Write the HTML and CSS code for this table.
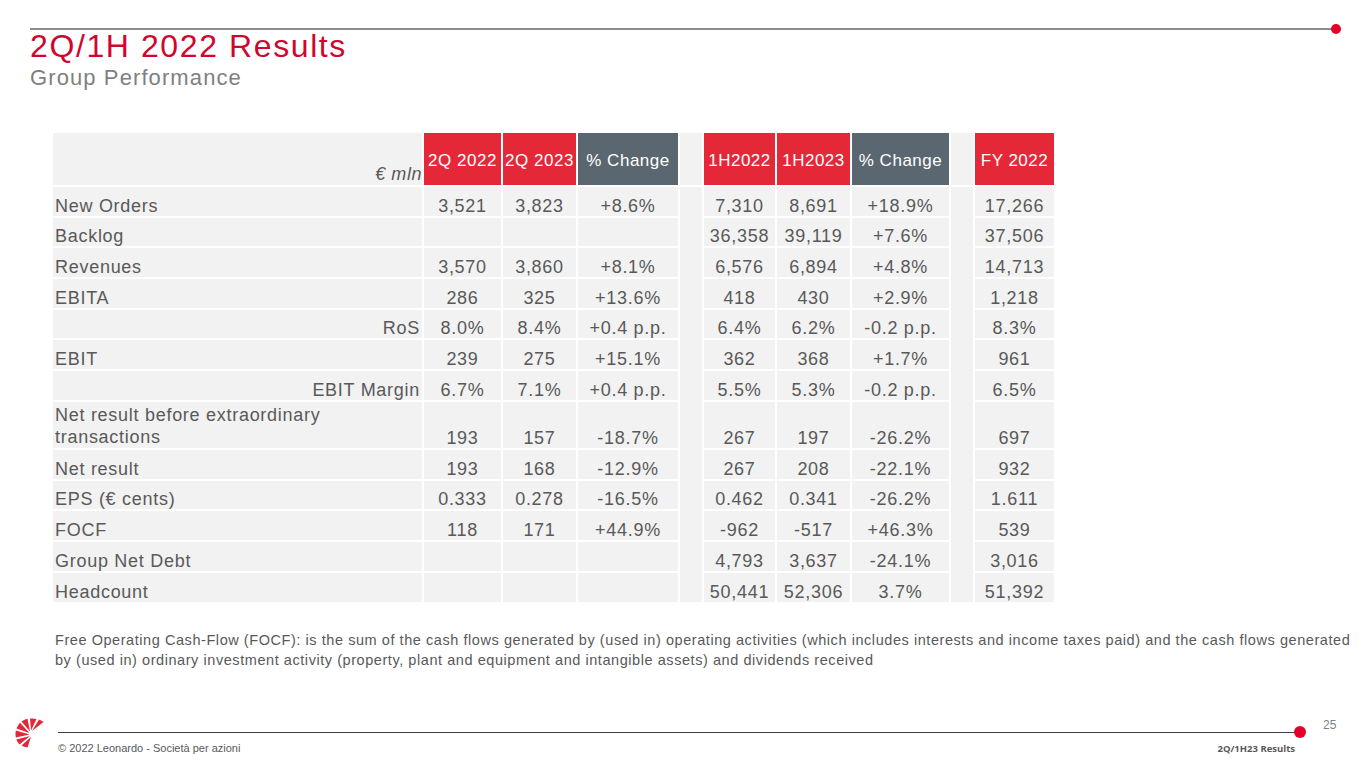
FILE: index.html
```html
<!DOCTYPE html>
<html lang="en">
<head>
<meta charset="utf-8">
<title>2Q/1H 2022 Results</title>
<link rel="stylesheet" href="styles.css">
</head>
<body>
<div class="slide">
  <div class="topline"><div class="rule"></div><div class="dot"></div></div>
  <header class="heading">
    <h1 class="title">2Q/1H 2022 Results</h1>
    <h2 class="subtitle">Group Performance</h2>
  </header>

  <table class="perf">
    <colgroup>
      <col class="c-label"><col class="c-a"><col class="c-b"><col class="c-c"><col class="c-sp">
      <col class="c-d"><col class="c-e"><col class="c-f"><col class="c-sp"><col class="c-g">
    </colgroup>
    <thead>
      <tr>
        <th class="unit">€ mln</th>
        <th class="red">2Q 2022</th>
        <th class="red">2Q 2023</th>
        <th class="grey">% Change</th>
        <th class="sp"></th>
        <th class="red">1H2022</th>
        <th class="red">1H2023</th>
        <th class="grey">% Change</th>
        <th class="sp"></th>
        <th class="red">FY 2022</th>
      </tr>
    </thead>
    <tbody>
      <tr><td class="lbl">New Orders</td><td>3,521</td><td>3,823</td><td>+8.6%</td><td class="sp"></td><td>7,310</td><td>8,691</td><td>+18.9%</td><td class="sp"></td><td>17,266</td></tr>
      <tr><td class="lbl">Backlog</td><td></td><td></td><td></td><td class="sp"></td><td>36,358</td><td>39,119</td><td>+7.6%</td><td class="sp"></td><td>37,506</td></tr>
      <tr><td class="lbl">Revenues</td><td>3,570</td><td>3,860</td><td>+8.1%</td><td class="sp"></td><td>6,576</td><td>6,894</td><td>+4.8%</td><td class="sp"></td><td>14,713</td></tr>
      <tr><td class="lbl">EBITA</td><td>286</td><td>325</td><td>+13.6%</td><td class="sp"></td><td>418</td><td>430</td><td>+2.9%</td><td class="sp"></td><td>1,218</td></tr>
      <tr><td class="lbl right">RoS</td><td>8.0%</td><td>8.4%</td><td>+0.4 p.p.</td><td class="sp"></td><td>6.4%</td><td>6.2%</td><td>-0.2 p.p.</td><td class="sp"></td><td>8.3%</td></tr>
      <tr><td class="lbl">EBIT</td><td>239</td><td>275</td><td>+15.1%</td><td class="sp"></td><td>362</td><td>368</td><td>+1.7%</td><td class="sp"></td><td>961</td></tr>
      <tr><td class="lbl right">EBIT Margin</td><td>6.7%</td><td>7.1%</td><td>+0.4 p.p.</td><td class="sp"></td><td>5.5%</td><td>5.3%</td><td>-0.2 p.p.</td><td class="sp"></td><td>6.5%</td></tr>
      <tr class="tall"><td class="lbl">Net result before extraordinary<br>transactions</td><td>193</td><td>157</td><td>-18.7%</td><td class="sp"></td><td>267</td><td>197</td><td>-26.2%</td><td class="sp"></td><td>697</td></tr>
      <tr><td class="lbl">Net result</td><td>193</td><td>168</td><td>-12.9%</td><td class="sp"></td><td>267</td><td>208</td><td>-22.1%</td><td class="sp"></td><td>932</td></tr>
      <tr><td class="lbl">EPS (€ cents)</td><td>0.333</td><td>0.278</td><td>-16.5%</td><td class="sp"></td><td>0.462</td><td>0.341</td><td>-26.2%</td><td class="sp"></td><td>1.611</td></tr>
      <tr><td class="lbl">FOCF</td><td>118</td><td>171</td><td>+44.9%</td><td class="sp"></td><td>-962</td><td>-517</td><td>+46.3%</td><td class="sp"></td><td>539</td></tr>
      <tr><td class="lbl">Group Net Debt</td><td></td><td></td><td></td><td class="sp"></td><td>4,793</td><td>3,637</td><td>-24.1%</td><td class="sp"></td><td>3,016</td></tr>
      <tr><td class="lbl">Headcount</td><td></td><td></td><td></td><td class="sp"></td><td>50,441</td><td>52,306</td><td>3.7%</td><td class="sp"></td><td>51,392</td></tr>
    </tbody>
  </table>

  <p class="note">Free Operating Cash-Flow (FOCF): is the sum of the cash flows generated by (used in) operating activities (which includes interests and income taxes paid) and the cash flows generated by (used in) ordinary investment activity (property, plant and equipment and intangible assets) and dividends received</p>

  <footer class="footer">
    <svg class="logo" viewBox="0 0 30 30" width="30" height="30" aria-hidden="true">
      <g fill="#e3273a">
        <path d="M17 13 L24 1.5 Q27 2.5 28.5 4 Z"/>
        <path d="M16 12.5 L15 0.5 Q18.5 0.2 21.5 1 Z"/>
        <path d="M15 13.5 L6.5 3.5 Q9.5 1.5 12.5 0.8 Z"/>
        <path d="M14.5 15 L1.5 10.5 Q3 7 5 4.8 Z"/>
        <path d="M14.5 16.5 L0.8 19.5 Q0.2 15.5 0.8 12.5 Z"/>
        <path d="M15 18 L4.5 26.5 Q2.2 24 1.3 21.5 Z"/>
        <path d="M16 19 L12.5 29.5 Q9 28.8 6.5 27.5 Z"/>
      </g>
    </svg>
    <div class="foot-main">
      <div class="foot-rule"><div class="rule dark"></div><div class="dot big"></div><span class="page">25</span></div>
      <div class="foot-texts">
        <span class="copy">© 2022 Leonardo - Società per azioni</span>
        <span class="doc">2Q/1H23 Results</span>
      </div>
    </div>
  </footer>
</div>
</body>
</html>
```

FILE: styles.css
```css
html, body {
  margin: 0;
  padding: 0;
  background: #ffffff;
}

.slide {
  width: 1365px;
  height: 768px;
  box-sizing: border-box;
  padding-top: 24px;
  font-family: "Liberation Sans", Arial, sans-serif;
  color: #595959;
  display: flex;
  flex-direction: column;
  overflow: hidden;
}

.topline {
  display: flex;
  align-items: center;
  margin-left: 30px;
  width: 1311px;
}

.rule {
  flex: 1;
  height: 2px;
  background: #8c8c8c;
}

.rule.dark {
  height: 1px;
  background: #404040;
}

.dot {
  width: 10px;
  height: 10px;
  border-radius: 50%;
  background: #e4002b;
  margin-left: -1px;
}

.dot.big {
  width: 12px;
  height: 12px;
}

.heading {
  margin-left: 30px;
  margin-top: -4px;
}

.title {
  margin: 0;
  font-weight: normal;
  font-size: 32px;
  line-height: 32px;
  letter-spacing: 0.05em;
  color: #d0062f;
}

.subtitle {
  margin: 4px 0 0 0;
  font-weight: normal;
  font-size: 22px;
  line-height: 24px;
  letter-spacing: 0.05em;
  color: #7f7f7f;
}

.perf {
  margin: 43px 0 0 53px;
  border-collapse: separate;
  border-spacing: 0;
  table-layout: fixed;
  width: 1003px;
  font-size: 18px;
  letter-spacing: 0.04em;
  color: #595959;
}

.c-label { width: 371px; }
.c-a { width: 79px; }
.c-b { width: 75px; }
.c-c { width: 102px; }
.c-sp { width: 24px; }
.c-d { width: 73px; }
.c-e { width: 75px; }
.c-f { width: 99px; }
.c-g { width: 81px; }

.perf th,
.perf td {
  padding: 0;
  background: #f2f2f2;
  border-right: 2px solid #ffffff;
  border-bottom: 2px solid #ffffff;
  white-space: nowrap;
  overflow: hidden;
}

.perf thead tr {
  height: 54px;
}

.perf th {
  font-weight: normal;
  font-size: 17px;
  color: #ffffff;
  text-align: center;
  vertical-align: middle;
  letter-spacing: 0.03em;
  padding-top: 3px;
}

.perf th.red { background: #e42838; }
.perf th.grey { background: #5b6770; }

.perf th.unit {
  color: #595959;
  font-style: italic;
  text-align: right;
  vertical-align: bottom;
  padding-top: 0;
  padding-bottom: 0;
  font-size: 18px;
}

.perf tbody tr {
  height: 30.7px;
}

.perf tbody tr.tall {
  height: 48.3px;
}

.perf td {
  text-align: center;
  vertical-align: bottom;
  line-height: 20px;
  padding-bottom: 0;
}

.perf td.lbl {
  text-align: left;
  padding-left: 2px;
  white-space: normal;
}

.perf tr.tall td.lbl {
  line-height: 22px;
  padding-bottom: 0;
}

.perf td.lbl.right {
  text-align: right;
  padding-right: 2px;
  padding-left: 0;
}

.perf td.sp {
  border-bottom: none;
}

.perf tbody tr:last-child td.sp {
  border-bottom: 2px solid #ffffff;
}

.note {
  margin: 26px 0 0 55px;
  width: 1300px;
  font-size: 14.5px;
  line-height: 20px;
  letter-spacing: 0.56px;
  color: #595959;
}

.footer {
  margin-top: auto;
  margin-bottom: 13px;
  display: flex;
  align-items: flex-start;
}

.logo {
  margin: 0 0 0 15px;
  width: 30px;
  height: 30px;
}

.foot-main {
  margin-left: 13px;
  width: 1294px;
  padding-top: 8px;
}

.foot-rule {
  display: flex;
  align-items: center;
  width: 1248px;
  position: relative;
}

.foot-rule .dot {
  margin-left: -6px;
}

.page {
  position: absolute;
  left: 1265px;
  top: -8px;
  font-size: 12px;
  color: #7f7f7f;
}

.foot-texts {
  display: flex;
  justify-content: space-between;
  width: 1237px;
  margin-top: 4px;
}

.copy {
  font-size: 11px;
  color: #595959;
}

.doc {
  font-family: "Open Sans", "Liberation Sans", sans-serif;
  font-weight: 700;
  font-size: 9.5px;
  color: #595959;
}
```
